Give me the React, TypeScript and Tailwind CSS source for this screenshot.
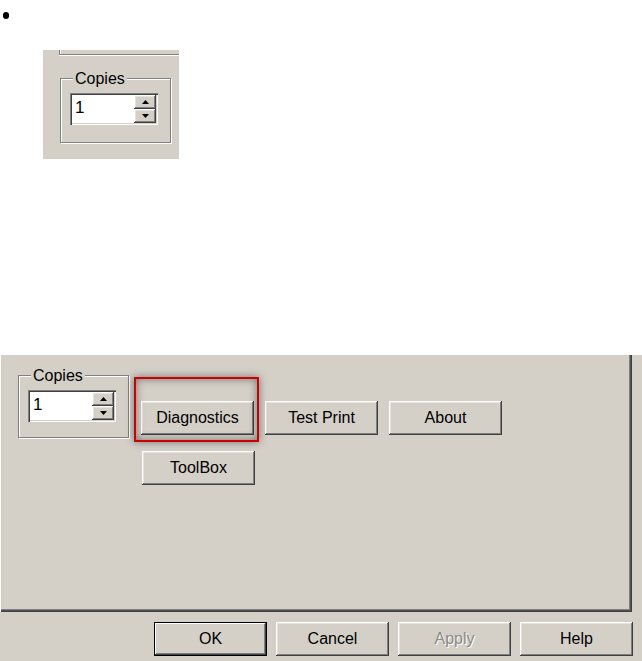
/* Printer properties dialog, Copies box + buttons. */
import React from "react";
import clsx from "clsx";

const raised =
  "shadow-[inset_-1px_-1px_#404040,inset_1px_1px_#ffffff,inset_-2px_-2px_#808080,inset_2px_2px_#e6e3dc]";

const Btn = ({
  label,
  disabled,
  def,
}: {
  label: string;
  disabled?: boolean;
  def?: boolean;
}) => (
  <button
    type="button"
    className={clsx(
      "flex h-[34px] w-[113px] items-center justify-center bg-[#d4d0c8] text-[16px] leading-none",
      def
        ? "border border-black shadow-[inset_-1px_-1px_#404040,inset_1px_1px_#ffffff,inset_-2px_-2px_#808080]"
        : raised,
      disabled ? "text-[#8c8a85] [text-shadow:1px_1px_0_#ffffff]" : "text-black"
    )}
  >
    {label}
  </button>
);

const Arrow = ({ up }: { up?: boolean }) => (
  <svg width="7" height="4" viewBox="0 0 7 4">
    {up ? <path d="M0 4 L3.5 0 L7 4 Z" fill="#000" /> : <path d="M0 0 L7 0 L3.5 4 Z" fill="#000" />}
  </svg>
);

/* Copies の枠. */
const CopiesBox = ({ h }: { h: string }) => (
  <div
    className={clsx(
      "relative w-[111px] shrink-0 border border-[#808080] shadow-[inset_1px_1px_#ffffff,1px_1px_#ffffff]",
      h
    )}
  >
    <span className="absolute -top-[8px] left-[12px] bg-[#d4d0c8] px-[2px] text-[16px] leading-none">
      Copies
    </span>
    <div className="ml-[9px] mt-[14px] flex h-[32px] w-[88px] bg-white shadow-[inset_1px_1px_#808080,inset_2px_2px_#404040,inset_-1px_-1px_#ffffff,inset_-2px_-2px_#d4d0c8]">
      <span className="flex-1 pl-[5px] pt-[6px] text-[17px] leading-none text-black">1</span>
      <div className="mr-[2px] mt-[2px] flex flex-col">
        <div className={clsx("flex h-[14px] w-[22px] items-center justify-center bg-[#d4d0c8]", raised)}>
          <Arrow up />
        </div>
        <div className={clsx("flex h-[14px] w-[22px] items-center justify-center bg-[#d4d0c8]", raised)}>
          <Arrow />
        </div>
      </div>
    </div>
  </div>
);

const App = () => {
  return (
    <div className="min-h-[661px] w-[642px] bg-white font-['Liberation_Sans',Arial,sans-serif] text-black">
      {/* 箇条書きの点. */}
      <div className="pl-[3px] pt-[12px]">
        <div className="h-[7px] w-[6px] rounded-full bg-black" />
      </div>

      {/* 小さいスクリーンショット. */}
      <div className="ml-[43px] mt-[31px] h-[109px] w-[136px] overflow-hidden bg-[#d4d0c8]">
        <div className="ml-[16px] h-[5px] w-[200px] border-b border-l border-[#808080] shadow-[inset_1px_0_#ffffff,0_1px_#ffffff]" />
        <div className="ml-[17px] mt-[23px]">
          <CopiesBox h="h-[65px]" />
        </div>
      </div>

      {/* 大きいスクリーンショット. */}
      <div className="mt-[196px] h-[306px] bg-[#d4d0c8]">
        <div className="flex h-[257px] w-[632px] pl-[18px] pt-[20px] shadow-[inset_1px_0_#ffffff,inset_-1px_-1px_#404040,inset_-2px_-2px_#505050,inset_-3px_-3px_#808080]">
          <CopiesBox h="h-[63px]" />

          <div className="ml-[12px] mt-[26px] flex flex-col gap-[16px]">
            <div className="flex gap-[11px]">
              <div className="relative">
                <Btn label="Diagnostics" />
                <div className="pointer-events-none absolute -bottom-[7px] -left-[7px] -right-[5px] -top-[24px] border-2 border-[#d00000] shadow-[0_0_8px_rgba(0,0,0,0.45),inset_0_0_8px_rgba(0,0,0,0.45)]" />
              </div>
              <Btn label="Test Print" />
              <Btn label="About" />
            </div>
            <div className="pl-[1px]">
              <Btn label="ToolBox" />
            </div>
          </div>
        </div>

        {/* 下のボタン. */}
        <div className="mt-[10px] flex gap-[9px] pl-[154px]">
          <Btn label="OK" def />
          <Btn label="Cancel" />
          <Btn label="Apply" disabled />
          <Btn label="Help" />
        </div>
      </div>
    </div>
  );
};

export default App;
